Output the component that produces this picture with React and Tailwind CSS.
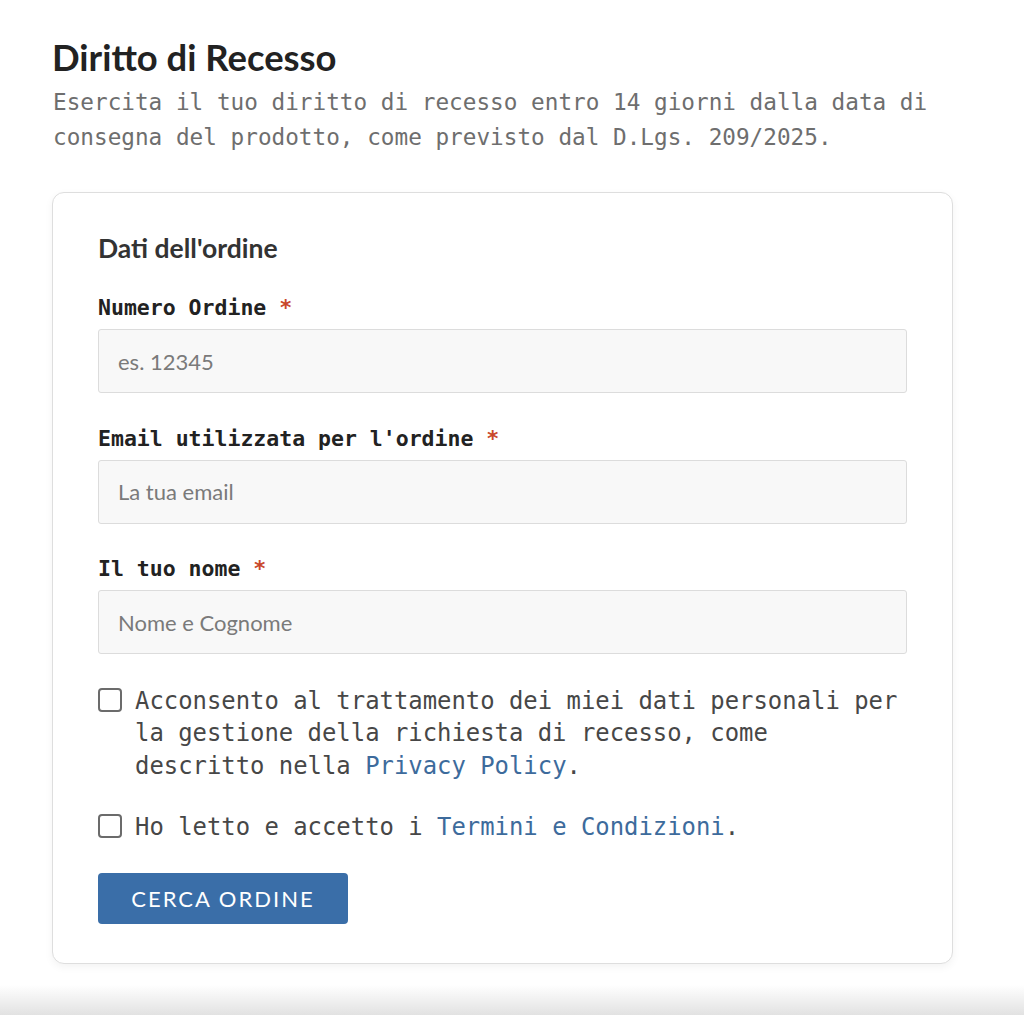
import React, { useState } from 'react';

const mono = "font-['DejaVu_Sans_Mono','Liberation_Mono',monospace]";
const lato = "font-['Lato','Noto_Sans',sans-serif]";

const Field = ({ label, placeholder, value, onChange }) => (
  <div className="mb-[30.5px]">
    <label className={`${mono} block text-[21.5px] font-bold text-[#222] leading-[30px] mb-[6px]`}>
      {label} <span className="text-[#c9482b]">*</span>
    </label>
    <input
      type="text"
      placeholder={placeholder}
      value={value}
      onChange={onChange}
      className={`${lato} w-full h-[64px] px-[19px] bg-[#f8f8f8] border border-[#dcdcdc] rounded-[3px] text-[22px] text-[#333] placeholder:text-[#7a7a7a] outline-none`}
    />
  </div>
);

const Check = ({ checked, onChange, children }) => (
  <label className="flex items-start gap-[13px] cursor-pointer">
    <input
      type="checkbox"
      checked={checked}
      onChange={onChange}
      className="appearance-none shrink-0 mt-[3px] w-[24px] h-[24px] border-2 border-[#6b6b6b] rounded-[4px] bg-white checked:bg-[#3a6ea8]"
    />
    <span className={`${mono} text-[23.9px] leading-[32.5px] text-[#474747]`}>{children}</span>
  </label>
);

export default function App() {
  const [form, setForm] = useState({ order: '', email: '', name: '' });
  const [privacy, setPrivacy] = useState(false);
  const [terms, setTerms] = useState(false);

  return (
    <div className="min-h-[1015px] bg-white relative overflow-hidden">
      <div className="pl-[52px] pt-[35px] pb-[50px] w-[953px]">
        <h1 className={`${lato} text-[36.4px] font-bold text-[#222] leading-[44px]`}>Diritto di Recesso</h1>
        <p className={`${mono} text-[22.7px] leading-[35px] text-[#6e6e6e] mt-[6px] pl-[1px]`}>
          Esercita il tuo diritto di recesso entro 14 giorni dalla data di consegna del prodotto, come previsto dal D.Lgs. 209/2025.
        </p>

        {/* order form card */}
        <div className="mt-[37px] border border-[#dedede] rounded-[12px] bg-white px-[45px] pt-[39px] pb-[39px] shadow-[0_3px_8px_rgba(0,0,0,0.05)]">
          <h2 className={`${lato} text-[26.5px] font-bold text-[#333] leading-[32px] mb-[29px]`}>Dati dell'ordine</h2>

          <Field
            label="Numero Ordine"
            placeholder="es. 12345"
            value={form.order}
            onChange={(e) => setForm({ ...form, order: e.target.value })}
          />
          <Field
            label="Email utilizzata per l'ordine"
            placeholder="La tua email"
            value={form.email}
            onChange={(e) => setForm({ ...form, email: e.target.value })}
          />
          <Field
            label="Il tuo nome"
            placeholder="Nome e Cognome"
            value={form.name}
            onChange={(e) => setForm({ ...form, name: e.target.value })}
          />

          <div className="mt-[5px] flex flex-col gap-[29px]">
            <Check checked={privacy} onChange={() => setPrivacy(!privacy)}>
              Acconsento al trattamento dei miei dati personali per la gestione della richiesta di recesso, come descritto nella{' '}
              <a href="#" className="text-[#3d6b9c]">Privacy Policy</a>.
            </Check>
            <Check checked={terms} onChange={() => setTerms(!terms)}>
              Ho letto e accetto i <a href="#" className="text-[#3d6b9c]">Termini e Condizioni</a>.
            </Check>
          </div>

          <button
            type="button"
            className={`${lato} mt-[29px] w-[250px] h-[51px] bg-[#3a6ea8] rounded-[4px] text-white text-[22px] tracking-[2px]`}
          >
            CERCA ORDINE
          </button>
        </div>
      </div>

      {/* fade at page bottom */}
      <div className="absolute left-0 right-0 bottom-0 h-[30px] bg-gradient-to-b from-white to-[#e2e2e2]" />
    </div>
  );
}
